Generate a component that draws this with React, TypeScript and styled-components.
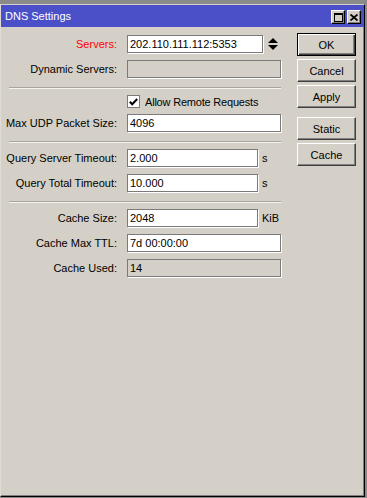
import React from "react";
import styled, { createGlobalStyle, css } from "styled-components";

const GlobalStyle = createGlobalStyle`
  html, body {
    margin: 0;
    padding: 0;
    background: #8b8b8b;
    font-family: "Liberation Sans", Arial, sans-serif;
    font-size: 11px;
  }
`;

const panel = "#d4d0c8";

const Window = styled.div`
  width: 365px;
  height: 493px;
  margin-top: 4px;
  box-sizing: border-box;
  background: ${panel};
  border-top: 1px solid ${panel};
  border-left: 1px solid #dfdcd6;
  border-right: 1px solid #000;
  border-bottom: 1px solid #000;
  box-shadow: inset -1px -1px 0 #808080;
  display: flex;
  flex-direction: column;
`;

const TitleBar = styled.div`
  height: 22px;
  background: #4b50c9;
  color: #fff;
  display: flex;
  align-items: center;
  padding: 0 3px 0 4px;
  font-size: 11px;
`;

const TitleText = styled.div`
  flex: 1;
  margin-top: -1px;
`;

const TitleButtons = styled.div`
  display: flex;
  gap: 2px;
  margin-top: 2px;
`;

const TitleButton = styled.div`
  width: 14px;
  height: 14px;
  box-sizing: border-box;
  background: ${panel};
  border: 1px solid;
  border-color: #fff #000 #000 #fff;
  box-shadow: inset -1px -1px 0 #808080;
  display: flex;
  align-items: center;
  justify-content: center;
`;

const Body = styled.div`
  display: flex;
  padding-top: 6px;
`;

const Form = styled.div`
  width: 281px;
  display: flex;
  flex-direction: column;
  padding-top: 2px;
`;

const Section = styled.div`
  display: grid;
  grid-template-columns: 116px 155px;
  column-gap: 10px;
  row-gap: 7px;
  align-items: center;
`;

const CheckSection = styled(Section)`
  row-gap: 6px;
`;

const Label = styled.div<{ $red?: boolean }>`
  text-align: right;
  white-space: nowrap;
  color: ${(p) => (p.$red ? "#f00" : "#000")};
`;

const FieldWrap = styled.div`
  display: flex;
  align-items: center;
  height: 18px;
`;

const Field = styled.input<{ $w?: number }>`
  width: ${(p) => p.$w ?? 154}px;
  height: 18px;
  box-sizing: border-box;
  border: 1px solid #7a7a7a;
  box-shadow: 1px 1px 0 #fff;
  background: #fff;
  padding: 0 0 0 2px;
  margin: 0;
  font-family: "Liberation Sans", Arial, sans-serif;
  font-size: 11px;
  color: #000;
  outline: none;
  &:read-only {
    cursor: default;
  }
  ${(p) =>
    p.disabled &&
    css`
      background: ${panel};
      color: #000;
    `}
`;

const Suffix = styled.span`
  margin-left: 4px;
`;

const Spin = styled.svg`
  margin-left: 5px;
`;

const Separator = styled.div`
  margin: 9px 0 6px 8px;
  width: 272px;
  border-top: 1px solid #a9a69f;
  border-bottom: 1px solid #f4f3f0;
`;

const CheckRow = styled.label`
  display: flex;
  align-items: center;
  gap: 5px;
  height: 13px;
  letter-spacing: -0.2px;
  white-space: nowrap;
`;

const CheckBox = styled.span`
  width: 13px;
  height: 13px;
  box-sizing: border-box;
  border: 1px solid #7a7a7a;
  background: #fff;
  display: flex;
  align-items: center;
  justify-content: center;
`;

const Buttons = styled.div`
  margin-left: 15px;
  display: flex;
  flex-direction: column;
  gap: 3px;
`;

const Btn = styled.button<{ $default?: boolean; $gap?: boolean }>`
  width: 59px;
  height: 23px;
  box-sizing: border-box;
  background: ${panel};
  border: 1px solid;
  border-color: #fff #404040 #404040 #fff;
  box-shadow: inset -1px -1px 0 #808080;
  font-family: "Liberation Sans", Arial, sans-serif;
  font-size: 11px;
  color: #000;
  padding: 0;
  margin: 0;
  ${(p) =>
    p.$default &&
    css`
      border-color: #000;
      box-shadow: inset 1px 1px 0 #fff, inset -1px -1px 0 #404040,
        inset -2px -2px 0 #808080;
    `}
  ${(p) =>
    p.$gap &&
    css`
      margin-top: 6px;
    `}
`;

type Row = {
  label: string;
  value: string;
  width?: number;
  suffix?: string;
  disabled?: boolean;
  red?: boolean;
  spin?: boolean;
};

function Rows({ rows }: { rows: Row[] }) {
  return (
    <>
      {rows.map((r) => (
        <React.Fragment key={r.label}>
          <Label $red={r.red}>{r.label}</Label>
          <FieldWrap>
            <Field
              readOnly
              disabled={r.disabled}
              value={r.value}
              $w={r.width}
            />
            {r.suffix && <Suffix>{r.suffix}</Suffix>}
            {r.spin && (
              <Spin width="10" height="12" viewBox="0 0 10 12">
                <path d="M5 0 L10 5 L0 5 Z" fill="#000" />
                <path d="M0 7 L10 7 L5 12 Z" fill="#000" />
              </Spin>
            )}
          </FieldWrap>
        </React.Fragment>
      ))}
    </>
  );
}

export default function App() {
  return (
    <>
      <GlobalStyle />
      <Window>
        <TitleBar>
          <TitleText>DNS Settings</TitleText>
          <TitleButtons>
            <TitleButton>
              <svg width="9" height="9" viewBox="0 0 9 9">
                <rect x="0.5" y="0.5" width="8" height="8" fill="none" stroke="#000" />
                <rect x="0" y="0" width="9" height="2" fill="#000" />
              </svg>
            </TitleButton>
            <TitleButton>
              <svg width="8" height="7" viewBox="0 0 8 7">
                <path d="M0.5 0.5 L7.5 6.5 M7.5 0.5 L0.5 6.5" stroke="#000" strokeWidth="1.8" />
              </svg>
            </TitleButton>
          </TitleButtons>
        </TitleBar>
        <Body>
          <Form>
            <Section>
              <Rows
                rows={[
                  { label: "Servers:", value: "202.110.111.112:5353", width: 136, red: true, spin: true },
                  { label: "Dynamic Servers:", value: "", disabled: true },
                ]}
              />
            </Section>
            <Separator />
            <CheckSection>
              <span />
              <CheckRow>
                <CheckBox>
                  <svg width="9" height="8" viewBox="0 0 9 8">
                    <path d="M0.8 3.8 L3.2 6.2 L8.2 1" fill="none" stroke="#000" strokeWidth="2" />
                  </svg>
                </CheckBox>
                Allow Remote Requests
              </CheckRow>
              <Rows rows={[{ label: "Max UDP Packet Size:", value: "4096" }]} />
            </CheckSection>
            <Separator />
            <Section>
              <Rows
                rows={[
                  { label: "Query Server Timeout:", value: "2.000", width: 131, suffix: "s" },
                  { label: "Query Total Timeout:", value: "10.000", width: 131, suffix: "s" },
                ]}
              />
            </Section>
            <Separator />
            <Section>
              <Rows
                rows={[
                  { label: "Cache Size:", value: "2048", width: 131, suffix: "KiB" },
                  { label: "Cache Max TTL:", value: "7d 00:00:00" },
                  { label: "Cache Used:", value: "14", disabled: true },
                ]}
              />
            </Section>
          </Form>
          <Buttons>
            <Btn $default>OK</Btn>
            <Btn>Cancel</Btn>
            <Btn>Apply</Btn>
            <Btn $gap>Static</Btn>
            <Btn>Cache</Btn>
          </Buttons>
        </Body>
      </Window>
    </>
  );
}
